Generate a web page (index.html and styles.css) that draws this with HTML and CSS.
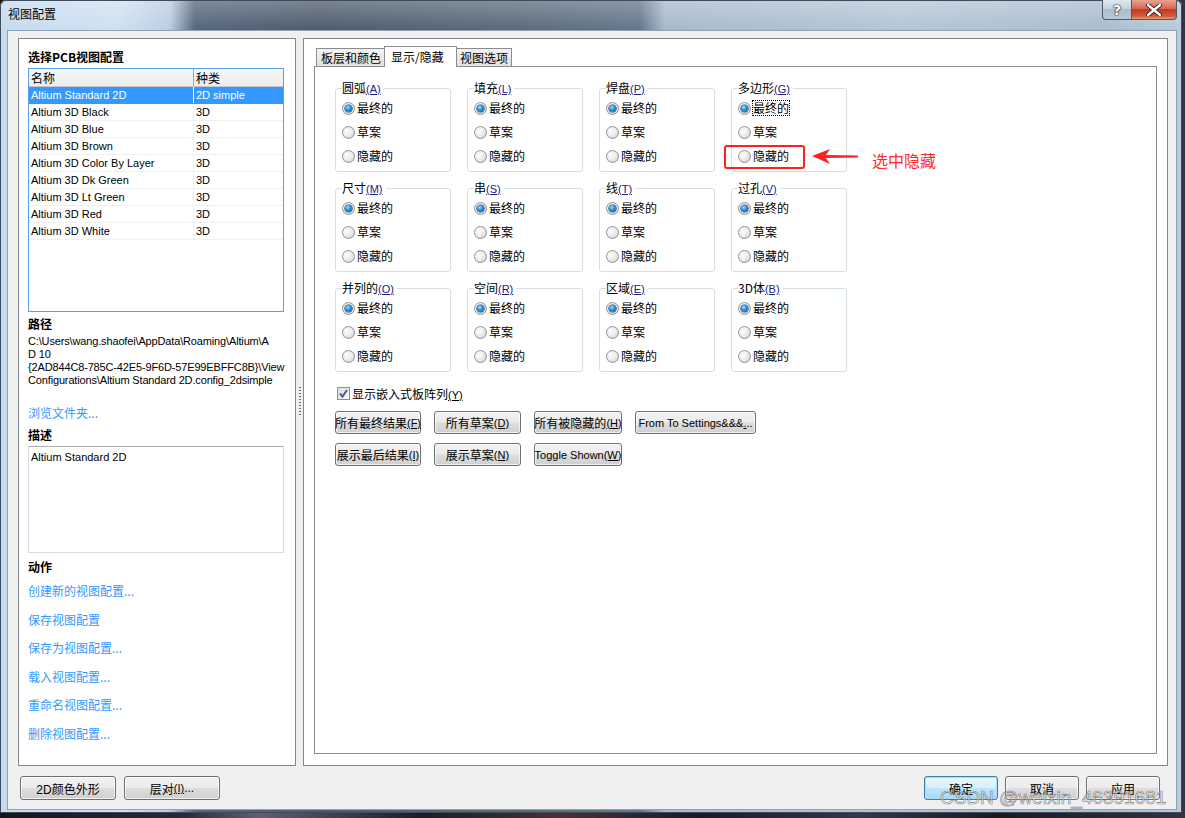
FILE: index.html
```html
<!DOCTYPE html>
<html lang="zh">
<head>
<meta charset="utf-8">
<title>视图配置</title>
<link rel="stylesheet" href="styles.css">
</head>
<body>
<div class="window">
  <div class="titlebar">
    <span class="title">视图配置</span>
    <div class="capbtns">
      <div class="cap help">?</div>
      <div class="cap close">
        <svg width="16" height="12" viewBox="0 0 16 12"><path d="M2 1 L14 11 M14 1 L2 11" stroke="#2a1a1a" stroke-width="4.2" stroke-linecap="round"/><path d="M2 1 L14 11 M14 1 L2 11" stroke="#ffffff" stroke-width="2.4" stroke-linecap="round"/></svg>
      </div>
    </div>
  </div>
  <div class="client">
    <div class="panels">
      <div class="left">
        <div class="lhead">选择PCB视图配置</div>
        <div class="list">
          <div class="lrow hdr"><span class="c1">名称</span><span class="c2">种类</span></div>
          <div class="lrow sel"><span class="c1">Altium Standard 2D</span><span class="c2">2D simple</span></div>
          <div class="lrow"><span class="c1">Altium 3D Black</span><span class="c2">3D</span></div>
          <div class="lrow"><span class="c1">Altium 3D Blue</span><span class="c2">3D</span></div>
          <div class="lrow"><span class="c1">Altium 3D Brown</span><span class="c2">3D</span></div>
          <div class="lrow"><span class="c1">Altium 3D Color By Layer</span><span class="c2">3D</span></div>
          <div class="lrow"><span class="c1">Altium 3D Dk Green</span><span class="c2">3D</span></div>
          <div class="lrow"><span class="c1">Altium 3D Lt Green</span><span class="c2">3D</span></div>
          <div class="lrow"><span class="c1">Altium 3D Red</span><span class="c2">3D</span></div>
          <div class="lrow"><span class="c1">Altium 3D White</span><span class="c2">3D</span></div>
        </div>
        <div class="lhead h-path">路径</div>
        <div class="path">C:\Users\wang.shaofei\AppData\Roaming\Altium\A<br>D 10<br>{2AD844C8-785C-42E5-9F6D-57E99EBFFC8B}\View<br>Configurations\Altium Standard 2D.config_2dsimple</div>
        <div class="link browse">浏览文件夹...</div>
        <div class="lhead h-desc">描述</div>
        <div class="desc">Altium Standard 2D</div>
        <div class="lhead h-act">动作</div>
        <div class="actions">
          <div class="link">创建新的视图配置...</div>
          <div class="link">保存视图配置</div>
          <div class="link">保存为视图配置...</div>
          <div class="link">载入视图配置...</div>
          <div class="link">重命名视图配置...</div>
          <div class="link">删除视图配置...</div>
        </div>
      </div>
      <div class="splitter"><div class="grip"></div></div>
      <div class="right">
        <div class="tabs">
          <div class="tab">板层和颜色</div>
          <div class="tab active">显示/隐藏</div>
          <div class="tab">视图选项</div>
        </div>
        <div class="page">
          <div class="groups">
            <div class="group"><div class="gt">圆弧<u>(A)</u></div><div class="opt"><span class="rb on"></span><span>最终的</span></div><div class="opt"><span class="rb"></span><span>草案</span></div><div class="opt"><span class="rb"></span><span>隐藏的</span></div></div>
            <div class="group"><div class="gt">填充<u>(L)</u></div><div class="opt"><span class="rb on"></span><span>最终的</span></div><div class="opt"><span class="rb"></span><span>草案</span></div><div class="opt"><span class="rb"></span><span>隐藏的</span></div></div>
            <div class="group"><div class="gt">焊盘<u>(P)</u></div><div class="opt"><span class="rb on"></span><span>最终的</span></div><div class="opt"><span class="rb"></span><span>草案</span></div><div class="opt"><span class="rb"></span><span>隐藏的</span></div></div>
            <div class="group"><div class="gt">多边形<u>(G)</u></div><div class="opt"><span class="rb on"></span><span class="focus">最终的</span></div><div class="opt"><span class="rb"></span><span>草案</span></div><div class="opt"><span class="rb"></span><span>隐藏的</span></div></div>
            <div class="group"><div class="gt">尺寸<u>(M)</u></div><div class="opt"><span class="rb on"></span><span>最终的</span></div><div class="opt"><span class="rb"></span><span>草案</span></div><div class="opt"><span class="rb"></span><span>隐藏的</span></div></div>
            <div class="group"><div class="gt">串<u>(S)</u></div><div class="opt"><span class="rb on"></span><span>最终的</span></div><div class="opt"><span class="rb"></span><span>草案</span></div><div class="opt"><span class="rb"></span><span>隐藏的</span></div></div>
            <div class="group"><div class="gt">线<u>(T)</u></div><div class="opt"><span class="rb on"></span><span>最终的</span></div><div class="opt"><span class="rb"></span><span>草案</span></div><div class="opt"><span class="rb"></span><span>隐藏的</span></div></div>
            <div class="group"><div class="gt">过孔<u>(V)</u></div><div class="opt"><span class="rb on"></span><span>最终的</span></div><div class="opt"><span class="rb"></span><span>草案</span></div><div class="opt"><span class="rb"></span><span>隐藏的</span></div></div>
            <div class="group"><div class="gt">并列的<u>(O)</u></div><div class="opt"><span class="rb on"></span><span>最终的</span></div><div class="opt"><span class="rb"></span><span>草案</span></div><div class="opt"><span class="rb"></span><span>隐藏的</span></div></div>
            <div class="group"><div class="gt">空间<u>(R)</u></div><div class="opt"><span class="rb on"></span><span>最终的</span></div><div class="opt"><span class="rb"></span><span>草案</span></div><div class="opt"><span class="rb"></span><span>隐藏的</span></div></div>
            <div class="group"><div class="gt">区域<u>(E)</u></div><div class="opt"><span class="rb on"></span><span>最终的</span></div><div class="opt"><span class="rb"></span><span>草案</span></div><div class="opt"><span class="rb"></span><span>隐藏的</span></div></div>
            <div class="group"><div class="gt">3D体<u>(B)</u></div><div class="opt"><span class="rb on"></span><span>最终的</span></div><div class="opt"><span class="rb"></span><span>草案</span></div><div class="opt"><span class="rb"></span><span>隐藏的</span></div></div>
          </div>
          <div class="check">
            <span class="cb"><svg width="11" height="11" viewBox="0 0 11 11"><path d="M2 5.5 L4.5 8.5 L9 2" fill="none" stroke="#4a5f8f" stroke-width="2"/></svg></span>
            <span>显示嵌入式板阵列<u>(Y)</u></span>
          </div>
          <div class="btngrid">
            <div class="btn">所有最终结果<u>(F)</u></div>
            <div class="btn">所有草案<u>(D)</u></div>
            <div class="btn">所有被隐藏的<u>(H)</u></div>
            <div class="btn">From To Settings&amp;&amp;&amp;<u>.</u>..</div>
            <div class="btn">展示最后结果<u>(I)</u></div>
            <div class="btn">展示草案<u>(N)</u></div>
            <div class="btn">Toggle Shown<u>(W)</u></div>
          </div>
        </div>
      </div>
    </div>
    <div class="footer">
      <div class="fgroup">
        <div class="btn fb">2D颜色外形</div>
        <div class="btn fb">层对<u>(I)</u>...</div>
      </div>
      <div class="fgroup fr">
        <div class="btn fb2 default">确定</div>
        <div class="btn fb2">取消</div>
        <div class="btn fb2">应用</div>
      </div>
    </div>
  </div>

  <div class="mark-rect"></div>
  <svg class="mark-arrow" width="48" height="18" viewBox="0 0 48 18"><polygon points="0,8 18,1 14,7 46,7.5 46,9.5 14,10 18,16" fill="#ff2222"/></svg>
  <div class="mark-text">选中隐藏</div>
  <div class="watermark">CSDN @weixin_46391681</div>
</div>
</body>
</html>
```
FILE: styles.css
```css
* { box-sizing: border-box; margin: 0; padding: 0; }
html, body { width: 1185px; height: 818px; overflow: hidden; }
body {
  background: linear-gradient(90deg, #15151c 0, #2c2834 180px, #6a5a70 260px, #1c1c26 420px, #48303a 560px, #1a1a28 700px, #30384a 860px, #1a1a20 1000px, #383040 1185px);
  font-family: "Liberation Sans", "Noto Sans CJK SC", sans-serif;
  font-size: 12px;
  color: #000;
}
u { text-decoration: underline; text-underline-offset: 1px; }

.window {
  position: relative;
  width: 1182px;
  height: 813px;
  border-radius: 6px 6px 0 0;
  background:
    linear-gradient(180deg, rgba(255,255,255,0.25) 0, rgba(255,255,255,0) 30px),
    linear-gradient(90deg, #c6dbef 0, #cfe0f1 120px, #b9cde0 170px, #55667a 195px, #4d5c6d 320px, #5b6b7c 520px, #64778a 640px, #a6bacb 665px, #b3c6d6 900px, #a9bdce 1100px, #b8cbdc 1182px);
  box-shadow: inset 0 0 0 1px #3d4b5a;
}

.titlebar {
  height: 30px;
  display: flex;
  justify-content: space-between;
  align-items: flex-start;
  padding: 0 5px 0 8px;
}
.title {
  line-height: 28px;
  font-size: 12px;
  font-family: "Noto Sans CJK SC", sans-serif;
  color: #000;
}
.capbtns { display: flex; }
.cap {
  height: 20px;
  display: flex;
  align-items: center;
  justify-content: center;
  border: 1px solid #4b5a6a;
  border-top: none;
}
.help {
  width: 29px;
  border-radius: 0 0 0 4px;
  border-right: none;
  background: linear-gradient(180deg, #dfe8f1 0, #c5d3e1 45%, #a9bccd 50%, #b9cad9 100%);
  font: bold 14px "DejaVu Sans", sans-serif;
  color: #fff;
  text-shadow: 0 0 1px #222, 0 0 1px #222, 0 0 2px #333;
}
.close {
  width: 46px;
  border-radius: 0 0 4px 0;
  background: linear-gradient(180deg, #e8a493 0, #d7664e 45%, #c5391c 50%, #d45b3d 85%, #e89f7c 100%);
}

.client {
  margin-left: 7px;
  width: 1170px;
  height: 780px;
  background: #f0f0f0;
  border: 1px solid #8fa3b8;
  padding: 7px 8px 0 10px;
}

.panels { display: flex; height: 728px; }

.left {
  width: 278px;
  background: #fff;
  border: 1px solid #828790;
  padding: 9px 10px 0 9px;
  display: flex;
  flex-direction: column;
}
.lhead {
  font-family: "Noto Sans CJK SC", sans-serif;
  font-weight: bold;
  font-size: 12px;
  line-height: 18px;
  height: 18px;
}
.list {
  margin-top: 2px;
  width: 256px;
  height: 244px;
  border: 1px solid #56a0e8;
  font-size: 11px;
}
.lrow {
  display: flex;
  height: 17px;
  line-height: 16px;
  border-bottom: 1px solid #f0f0f0;
}
.lrow .c1 { width: 165px; padding-left: 2px; border-right: 1px solid #f0f0f0; white-space: nowrap; overflow: hidden; }
.lrow .c2 { flex: 1; padding-left: 2px; white-space: nowrap; }
.lrow.hdr {
  height: 18px;
  background: linear-gradient(#f7f7f7, #ececec);
  border-bottom: 1px solid #c8c8c8;
  font-family: "Noto Sans CJK SC", sans-serif;
  font-size: 12px;
  line-height: 17px;
}
.lrow.hdr .c1 { border-right: 1px solid #a8a8a8; }
.lrow.sel { background: #3399ff; color: #fff; border-bottom-color: #3399ff; }
.lrow.sel .c1 { border-right-color: #fff; }

.h-path { margin-top: 3px; }
.path {
  margin-top: 2px;
  font-size: 11px;
  line-height: 13px;
  white-space: nowrap;
  letter-spacing: -0.15px;
}
.link {
  color: #3399ff;
  font-family: "Noto Sans CJK SC", sans-serif;
  font-size: 12px;
  line-height: 18px;
}
.browse { margin-top: 17px; }
.h-desc { margin-top: 4px; }
.desc {
  margin-top: 2px;
  width: 256px;
  height: 107px;
  border: 1px solid #d8dde4;
  border-top-color: #abadb3;
  font-size: 11px;
  line-height: 16px;
  padding: 2px 2px;
}
.h-act { margin-top: 5px; }
.actions { margin-top: 1px; }
.actions .link { line-height: 28.5px; height: 28.5px; }

.splitter {
  width: 7px;
  display: flex;
  align-items: center;
  justify-content: center;
}
.grip {
  width: 2px;
  height: 30px;
  background: repeating-linear-gradient(180deg, #6d6d6d 0 1px, transparent 1px 3px);
}

.right {
  width: 865px;
  background: #fff;
  border: 1px solid #828790;
  padding: 7px 10px 11px 10px;
  display: flex;
  flex-direction: column;
}
.tabs {
  display: flex;
  height: 20px;
  padding-left: 2px;
  position: relative;
  z-index: 1;
  align-items: flex-end;
}
.tab {
  height: 18px;
  border: 1px solid #898c95;
  border-bottom: none;
  background: linear-gradient(#f3f3f3, #e0e0e0);
  font-family: "Noto Sans CJK SC", sans-serif;
  font-size: 12px;
  line-height: 17px;
  padding: 0 4px;
  margin-right: -1px;
  white-space: nowrap;
  flex: none;
}
.tab:first-child { width: 71px; }
.tab:last-child { width: 57px; }
.tab.active {
  height: 21px;
  margin: 0 -2px -1px -2px;
  width: 73px;
  background: #fff;
  padding: 1px 6px 0;
  position: relative;
  z-index: 2;
}
.page {
  flex: 1;
  border: 1px solid #898c95;
  background: #fff;
  padding: 21px 20px 0 20px;
}

.groups {
  display: grid;
  grid-template-columns: repeat(4, 116px);
  grid-auto-rows: 84px;
  column-gap: 16px;
  row-gap: 16px;
}
.group {
  border: 1px solid #d5dfe5;
  border-radius: 3px;
  padding-left: 6px;
  display: flex;
  flex-direction: column;
  align-items: flex-start;
}
.gt {
  margin-top: -8px;
  height: 14px;
  line-height: 14px;
  background: #fff;
  padding: 0 3px 0 0;
  font-family: "Noto Sans CJK SC", sans-serif;
  font-size: 12px;
  white-space: nowrap;
}
.gt u { font-family: "Liberation Sans", sans-serif; font-size: 11px; color: #202080; }
.opt {
  display: flex;
  align-items: center;
  height: 24px;
  font-family: "Noto Sans CJK SC", sans-serif;
  font-size: 12px;
  line-height: 16px;
}
.gt + .opt { margin-top: 1px; }
.rb {
  width: 13px;
  height: 13px;
  flex: none;
  border-radius: 50%;
  border: 1px solid #929292;
  background: radial-gradient(circle at 35% 35%, #ffffff 0, #ececec 45%, #cdcdcd 100%);
  margin-right: 2px;
  position: relative;
}
.rb.on::after {
  content: "";
  position: absolute;
  left: 2px;
  top: 2px;
  width: 7px;
  height: 7px;
  border-radius: 50%;
  background: radial-gradient(circle at 40% 35%, #a6e0ff 0, #2a93dc 40%, #0b4f8c 100%);
  box-shadow: 0 0 0 0.6px #18446c;
}
.focus { outline: 1px dotted #000; outline-offset: 0; line-height: 14px; }

.check {
  margin-top: 13px;
  display: flex;
  align-items: center;
  height: 16px;
  padding-left: 2px;
  font-family: "Noto Sans CJK SC", sans-serif;
}
.check u { font-family: "Liberation Sans", sans-serif; font-size: 11px; }
.cb {
  width: 13px;
  height: 13px;
  border: 1px solid #8f8f8f;
  background: linear-gradient(135deg, #dcdcdc, #fbfbfb);
  display: flex;
  align-items: center;
  justify-content: center;
  margin-right: 2px;
}

.btngrid {
  margin-top: 10px;
  display: grid;
  grid-template-columns: 86px 87px 88px 121px;
  column-gap: 13px;
  row-gap: 9px;
}
.btn {
  height: 23px;
  border: 1px solid #707070;
  border-radius: 3px;
  background: linear-gradient(180deg, #f2f2f2 0, #ebebeb 48%, #dddddd 52%, #cfcfcf 100%);
  display: flex;
  align-items: center;
  justify-content: center;
  font-family: "Liberation Sans", "Noto Sans CJK SC", sans-serif;
  font-size: 12px;
  white-space: nowrap;
  box-shadow: inset 0 0 0 1px rgba(255,255,255,0.7);
}
.btn u { font-size: 11px; }
.btngrid .btn:nth-child(4), .btngrid .btn:nth-child(7) { font-size: 11px; }

.footer {
  margin-top: 10px;
  height: 24px;
  display: flex;
  justify-content: space-between;
  padding: 0 8px 0 2px;
}
.fgroup { display: flex; gap: 8px; }
.fgroup.fr { gap: 7px; }
.fb { width: 96px; height: 24px; }
.fb2 { width: 74px; height: 24px; }
.btn.default {
  border-color: #3c7fb1;
  box-shadow: inset 0 0 0 1px #a8dcf7;
  background: linear-gradient(180deg, #eaf6fd 0, #d9f0fc 48%, #bee6fd 52%, #a7d9f5 100%);
}

.mark-rect {
  position: absolute;
  left: 724px;
  top: 145px;
  width: 81px;
  height: 24px;
  border: 2px solid #ff2020;
  border-radius: 3px;
}
.mark-arrow {
  position: absolute;
  left: 812px;
  top: 148px;
}
.mark-text {
  position: absolute;
  left: 872px;
  top: 150px;
  font-family: "Noto Sans CJK SC", sans-serif;
  font-size: 16px;
  line-height: 20px;
  color: #ff2a2a;
}
.watermark {
  position: absolute;
  left: 940px;
  top: 787px;
  font-family: "Liberation Sans", sans-serif;
  font-size: 19px;
  line-height: 22px;
  color: rgba(255,255,255,0.55);
  -webkit-text-stroke: 0.6px rgba(90,90,90,0.8);
  white-space: nowrap;
}
```
